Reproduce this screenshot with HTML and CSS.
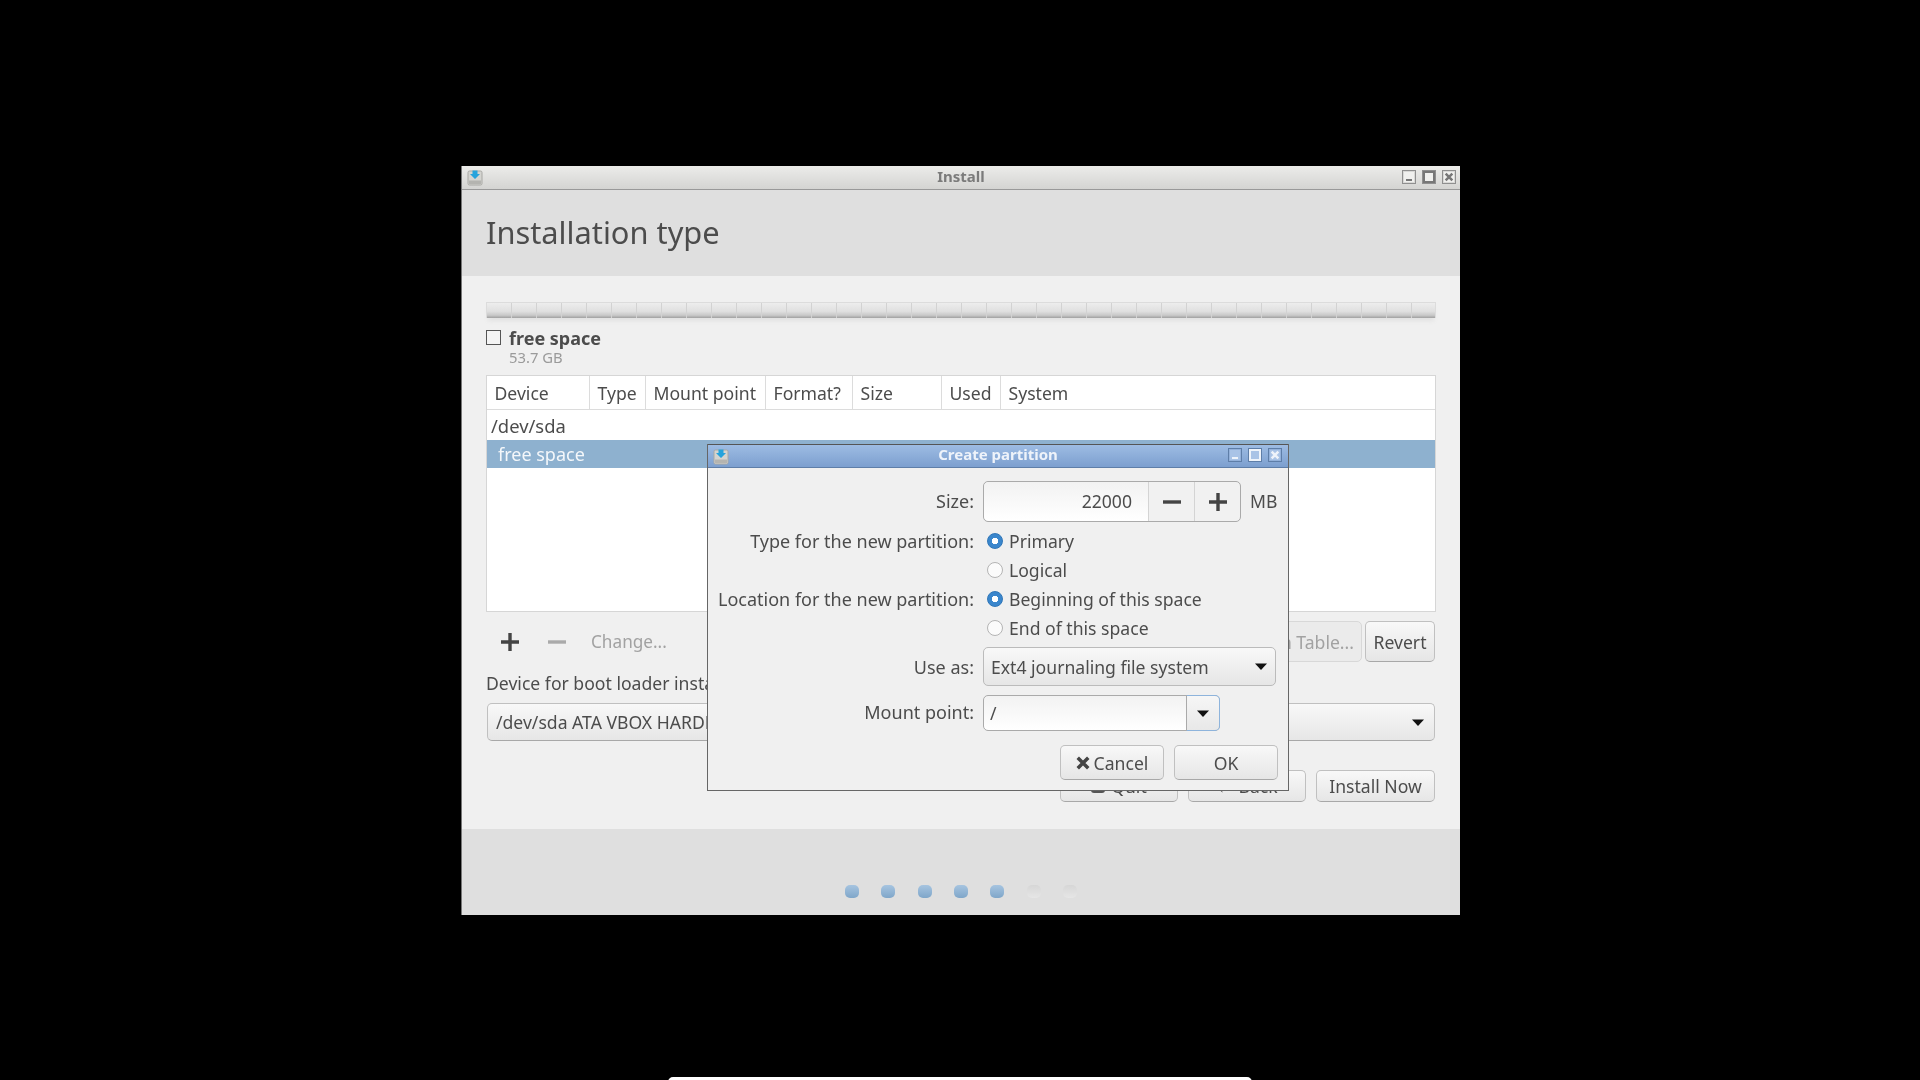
FILE: index.html
```html
<!DOCTYPE html>
<html lang="en">
<head>
    <meta charset="UTF-8">
    <title>Install</title>
    <link rel="stylesheet" href="styles.css">
</head>
<body>
    <svg class="defs" width="0" height="0">
        <symbol id="appIcon" viewBox="0 0 16 16">
            <rect x="1" y="1.5" width="14" height="14" rx="1.5" fill="#d4d4d0" stroke="#a8a8a4"/>
            <rect x="2" y="11" width="12" height="3.5" fill="#b4b4b0"/>
            <path d="M5.5 1h5v3.5h2.5L8 9.5 3 4.5h2.5z" fill="#25a3dc"/>
        </symbol>
        <symbol id="arrow" viewBox="0 0 14 9">
            <path d="M1 1.5h12L7 8z" fill="#111"/>
        </symbol>
        <symbol id="plus" viewBox="0 0 20 20">
            <path d="M1 10h18M10 1v18" stroke="currentColor" stroke-width="3.4" fill="none"/>
        </symbol>
        <symbol id="minus" viewBox="0 0 20 20">
            <path d="M1 10h18" stroke="currentColor" stroke-width="3.4" fill="none"/>
        </symbol>
        <symbol id="closeX" viewBox="0 0 12 12">
            <path d="M2 2l8 8M10 2l-8 8" stroke="currentColor" stroke-width="3" fill="none"/>
        </symbol>
    </svg>

    <div class="window">
        <div class="titlebar">
            <svg class="app-icon"><use href="#appIcon"/></svg>
            <span class="title">Install</span>
            <div class="wm-buttons">
                <span class="wm-btn wm-min"></span>
                <span class="wm-btn wm-max"></span>
                <span class="wm-btn"><svg class="wm-x"><use href="#closeX"/></svg></span>
            </div>
        </div>
        <header class="page-head">
            <h1>Installation type</h1>
        </header>
        <main class="content">
            <div class="disk-bar"></div>
            <div class="legend">
                <span class="legend-box"></span>
                <div>
                    <div class="legend-name">free space</div>
                    <div class="legend-size">53.7 GB</div>
                </div>
            </div>
            <div class="part-table">
                <div class="table-head">
                    <span class="col col-device">Device</span>
                    <span class="col col-type">Type</span>
                    <span class="col col-mount">Mount point</span>
                    <span class="col col-format">Format?</span>
                    <span class="col col-size">Size</span>
                    <span class="col col-used">Used</span>
                    <span class="col col-system">System</span>
                </div>
                <div class="row-disk">/dev/sda</div>
                <div class="row-selected">free space</div>
            </div>
            <div class="toolbar">
                <svg class="tool-icon"><use href="#plus"/></svg>
                <svg class="tool-icon tool-off"><use href="#minus"/></svg>
                <span class="change">Change...</span>
                <button class="btn btn-off btn-table">New Partition Table...</button>
                <button class="btn btn-revert">Revert</button>
            </div>
            <div class="boot-label">Device for boot loader installation:</div>
            <div class="combo boot-combo">
                <span>/dev/sda ATA VBOX HARDDISK (53.7 GB)</span>
                <svg class="arrow"><use href="#arrow"/></svg>
            </div>
            <div class="actions">
                <button class="btn btn-action"><span class="quit-icon"></span>Quit</button>
                <button class="btn btn-action">&#8592; Back</button>
                <button class="btn btn-install">Install Now</button>
            </div>
        </main>
        <footer class="steps">
            <span class="dot"></span>
            <span class="dot"></span>
            <span class="dot"></span>
            <span class="dot"></span>
            <span class="dot"></span>
            <span class="dot dot-off"></span>
            <span class="dot dot-off"></span>
        </footer>
    </div>

    <div class="dialog">
        <div class="titlebar titlebar-active">
            <svg class="app-icon"><use href="#appIcon"/></svg>
            <span class="title">Create partition</span>
            <div class="wm-buttons">
                <span class="wm-btn wm-min"></span>
                <span class="wm-btn wm-max"></span>
                <span class="wm-btn"><svg class="wm-x"><use href="#closeX"/></svg></span>
            </div>
        </div>
        <div class="form">
            <label class="form-label label-size">Size:</label>
            <div class="size-line">
                <div class="spin">
                    <span class="spin-value">22000</span>
                    <span class="spin-btn"><svg class="spin-icon"><use href="#minus"/></svg></span>
                    <span class="spin-btn"><svg class="spin-icon"><use href="#plus"/></svg></span>
                </div>
                <span class="unit">MB</span>
            </div>

            <label class="form-label">Type for the new partition:</label>
            <div class="radio"><span class="radio-dot on"></span>Primary</div>
            <span></span>
            <div class="radio"><span class="radio-dot"></span>Logical</div>

            <label class="form-label">Location for the new partition:</label>
            <div class="radio"><span class="radio-dot on"></span>Beginning of this space</div>
            <span></span>
            <div class="radio"><span class="radio-dot"></span>End of this space</div>

            <label class="form-label label-use">Use as:</label>
            <div class="combo use-combo">
                <span>Ext4 journaling file system</span>
                <svg class="arrow"><use href="#arrow"/></svg>
            </div>

            <label class="form-label label-mount">Mount point:</label>
            <div class="mount">
                <span class="mount-value">/</span>
                <span class="mount-btn"><svg class="arrow"><use href="#arrow"/></svg></span>
            </div>
        </div>
        <div class="dialog-actions">
            <button class="btn btn-dialog">
                <svg class="cancel-x" viewBox="0 0 12 12"><path d="M1.5 1.5l9 9M10.5 1.5l-9 9" stroke="#444" stroke-width="3" fill="none"/></svg>Cancel
            </button>
            <button class="btn btn-dialog">OK</button>
        </div>
    </div>

    <div class="dock"></div>
</body>
</html>
```
FILE: styles.css
```css
* {
    box-sizing: border-box;
}
html, body {
    margin: 0;
    height: 100%;
}
body {
    position: relative;
    overflow: hidden;
    background: #000;
    font-family: "Noto Sans", "Open Sans", sans-serif;
    font-size: 17.6px;
    color: #4c4c4c;
}
.defs {
    position: absolute;
}

/* windows on the desktop */
.window {
    position: absolute;
    left: 461px;
    top: 166px;
    width: 999px;
    height: 749px;
    display: flex;
    flex-direction: column;
    background: #f0f0f0;
    border-left: 1px solid #777;
    filter: blur(0.45px);
}
.dialog {
    position: absolute;
    left: 707px;
    top: 444px;
    width: 582px;
    height: 347px;
    display: flex;
    flex-direction: column;
    background: #f0f0f0;
    border: 1px solid #666;
    border-top: 0;
    filter: blur(0.45px);
}
.dock {
    position: absolute;
    left: 668px;
    top: 1077px;
    width: 584px;
    height: 10px;
    background: #fff;
    border-radius: 5px;
}

/* title bars */
.titlebar {
    position: relative;
    flex: none;
    height: 24px;
    display: flex;
    align-items: center;
    justify-content: center;
    padding-bottom: 4px;
    background: linear-gradient(#ececea, #d4d4d2);
    border-bottom: 1px solid #999;
}
.titlebar-active {
    background: linear-gradient(#9dbce3, #7c9fcf);
    border-bottom: 1px solid #5e7ea8;
    border-top: 1px solid #555;
}
.title {
    font-size: 15px;
    font-weight: 700;
    line-height: 20px;
    color: #7b7b7b;
}
.titlebar-active .title {
    color: #eef3fa;
}
.app-icon {
    position: absolute;
    left: 5px;
    top: 3px;
    width: 16px;
    height: 17px;
}
.wm-buttons {
    position: absolute;
    right: 4px;
    top: 4px;
    display: flex;
    gap: 6px;
}
.titlebar-active .wm-buttons {
    right: 6px;
    top: 3px;
}
.wm-btn {
    position: relative;
    width: 14px;
    height: 14px;
    display: flex;
    align-items: center;
    justify-content: center;
    background: #f0f0ee;
    border: 1px solid #8f8f8f;
    box-shadow: inset 0 0 0 1px #d8d8d6;
    color: #777;
}
.wm-x {
    width: 10px;
    height: 10px;
}
.wm-min::after {
    content: "";
    position: absolute;
    left: 3px;
    bottom: 2px;
    width: 6px;
    height: 2px;
    background: #777;
}
.wm-max::after {
    content: "";
    width: 8px;
    height: 8px;
    border: 2px solid #777;
}
.titlebar-active .wm-btn {
    background: #a9c3e6;
    border-color: #5e7ea8;
    box-shadow: inset 0 0 0 1px #93b1da;
    color: #eef3fa;
}
.titlebar-active .wm-min::after {
    background: #eef3fa;
}
.titlebar-active .wm-max::after {
    border-color: #eef3fa;
}

/* page */
.page-head {
    flex: none;
    height: 86px;
    padding: 22px 0 0 24px;
    background: #dfdfdf;
}
h1 {
    margin: 0;
    font-size: 30.8px;
    font-weight: 400;
    line-height: 40px;
    color: #4c4c4c;
}
.content {
    flex: 1;
    padding: 26px 24px 0 24px;
}
.disk-bar {
    height: 16px;
    border: 1px solid #dcdcdc;
    border-bottom: 0;
    background:
        repeating-linear-gradient(90deg, transparent 0 24px, #d2d2d2 24px 25px),
        linear-gradient(#ededed 0, #e0e0e0 55%, #c8c8c8 82%, #a0a0a0 100%);
    box-shadow: 0 5px 4px -2px #e2e2e2;
}
.legend {
    display: flex;
    gap: 8px;
    margin-top: 10px;
}
.legend-box {
    width: 15px;
    height: 15px;
    margin-top: 2px;
    background: #f4f4f4;
    border: 1px solid #555;
}
.legend-name {
    font-size: 18px;
    font-weight: 700;
    line-height: 21px;
}
.legend-size {
    font-size: 14.8px;
    line-height: 16px;
    color: #9a9a9a;
}

/* partition table */
.part-table {
    height: 237px;
    margin-top: 10px;
    background: #fff;
    border: 1px solid #d6d6d6;
}
.table-head {
    display: flex;
    height: 34px;
    border-bottom: 1px solid #dcdcdc;
}
.col {
    padding: 0 6px 0 7.5px;
    line-height: 34px;
    border-right: 1px solid #dcdcdc;
}
.col-device { width: 103px; }
.col-type { width: 56px; }
.col-mount { width: 120px; }
.col-format { width: 87px; }
.col-size { width: 89px; }
.col-used { width: 59px; }
.col-system {
    flex: 1;
    border-right: 0;
}
.row-disk {
    height: 30px;
    padding-left: 4px;
    font-size: 18.4px;
    line-height: 31px;
}
.row-selected {
    height: 28px;
    padding-left: 11px;
    font-size: 18px;
    line-height: 28px;
    background: #8eb1cf;
    color: #f4f7fa;
}

/* buttons */
.btn {
    display: inline-flex;
    align-items: center;
    justify-content: center;
    font: inherit;
    color: inherit;
    background: linear-gradient(#f8f8f8, #e6e6e6);
    border: 1px solid #c0c0c0;
    border-bottom-color: #a8a8a8;
    border-radius: 5px;
    padding: 0;
}
.btn-off {
    color: #a2a2a2;
    background: #ebebeb;
    border-color: #d8d8d8;
}
.toolbar {
    display: flex;
    align-items: center;
    height: 41px;
    margin-top: 9px;
}
.tool-icon {
    width: 20px;
    height: 20px;
    margin-left: 14px;
    margin-right: 13px;
    color: #444;
}
.tool-off {
    margin: 0 13px 0 14px;
    color: #aaa;
}
.change {
    margin-left: 11px;
    font-size: 17.2px;
    color: #a2a2a2;
}
.btn-table {
    height: 41px;
    margin-left: auto;
    padding: 0 7px;
}
.btn-revert {
    width: 70px;
    height: 41px;
    margin-left: 3px;
    margin-right: 1px;
}
.boot-label {
    margin-top: 9px;
    line-height: 24px;
}
.combo {
    display: flex;
    align-items: center;
    justify-content: space-between;
    background: linear-gradient(#f8f8f8, #e6e6e6);
    border: 1px solid #c0c0c0;
    border-bottom-color: #a8a8a8;
    border-radius: 5px;
}
.boot-combo {
    height: 38px;
    margin: 8px 1px 0 1px;
    padding: 0 9px 0 8px;
}
.arrow {
    width: 14px;
    height: 9px;
}
.actions {
    display: flex;
    justify-content: flex-end;
    gap: 10px;
    margin-top: 29px;
    margin-right: 1px;
}
.btn-action {
    width: 118px;
    height: 32px;
}
.btn-install {
    width: 119px;
    height: 32px;
    padding-bottom: 1px;
}
.quit-icon {
    width: 14px;
    height: 14px;
    margin-right: 6px;
    border-radius: 3px;
    background: #555;
}

/* step dots */
.steps {
    flex: none;
    height: 86px;
    padding-bottom: 17px;
    display: flex;
    align-items: flex-end;
    justify-content: center;
    gap: 22.4px;
    background: #dfdfdf;
}
.dot {
    width: 14px;
    height: 13px;
    border-radius: 5px;
    background: linear-gradient(#a6c4e0, #7fa6c9);
}
.dot-off {
    background: linear-gradient(#d6d6d6, #e6e6e6);
}

/* create partition dialog */
.form {
    display: grid;
    grid-template-columns: 266px 1fr;
    column-gap: 9px;
    padding-top: 13px;
    padding-right: 9px;
    align-items: center;
}
.form-label {
    font-size: 18px;
    text-align: right;
}
.label-size {
    margin-bottom: 6px;
}
.size-line {
    display: flex;
    align-items: center;
    gap: 9px;
    margin-bottom: 4px;
}
.spin {
    display: flex;
    width: 258px;
    height: 41px;
    align-items: stretch;
    background: #f1f1f1;
    border: 1px solid #aaa;
    border-radius: 5px;
}
.spin-value {
    width: 164px;
    padding-right: 16px;
    line-height: 38px;
    text-align: right;
    background: linear-gradient(#f2f2f2, #fff);
    border-radius: 5px 0 0 5px;
}
.spin-btn {
    flex: 1;
    display: flex;
    align-items: center;
    justify-content: center;
    border-left: 1px solid #d4d4d4;
}
.spin-icon {
    width: 20px;
    height: 20px;
    color: #444;
}
.unit {
    margin-bottom: 2px;
}
.radio {
    display: flex;
    align-items: center;
    gap: 6px;
    height: 29px;
    padding-left: 4px;
}
.radio-dot {
    width: 16px;
    height: 16px;
    border-radius: 50%;
    background: #fbfbfb;
    border: 1px solid #b4b4b4;
}
.radio-dot.on {
    background: radial-gradient(circle, #fff 0 3px, #3a86cc 3.5px);
    border-color: #2f76b8;
}
.label-use,
.label-mount {
    margin-top: 5px;
}
.label-mount {
    margin-top: 7px;
}
.use-combo {
    height: 39px;
    margin-top: 5px;
    padding: 0 7px 0 7px;
    border-color: #bbb;
    width: 293px;
}
.mount {
    display: flex;
    width: 237px;
    height: 36px;
    margin-top: 9px;
    background: linear-gradient(#f2f2f2, #fff);
    border: 1px solid #aaa;
    border-radius: 5px;
}
.mount-value {
    flex: 1;
    padding-left: 6px;
    line-height: 34px;
}
.mount-btn {
    display: flex;
    align-items: center;
    justify-content: center;
    width: 34px;
    margin: -1px -1px -1px 0;
    background: linear-gradient(#f6f6f6, #e8e8e8);
    border: 1px solid #8eb4dc;
    border-left-color: #aaa;
    border-radius: 0 5px 5px 0;
}
.dialog-actions {
    display: flex;
    justify-content: flex-end;
    gap: 10px;
    margin-top: 14px;
    padding-right: 10px;
}
.btn-dialog {
    width: 104px;
    height: 35px;
}
.cancel-x {
    width: 14px;
    height: 14px;
    margin-right: 4px;
}
```
